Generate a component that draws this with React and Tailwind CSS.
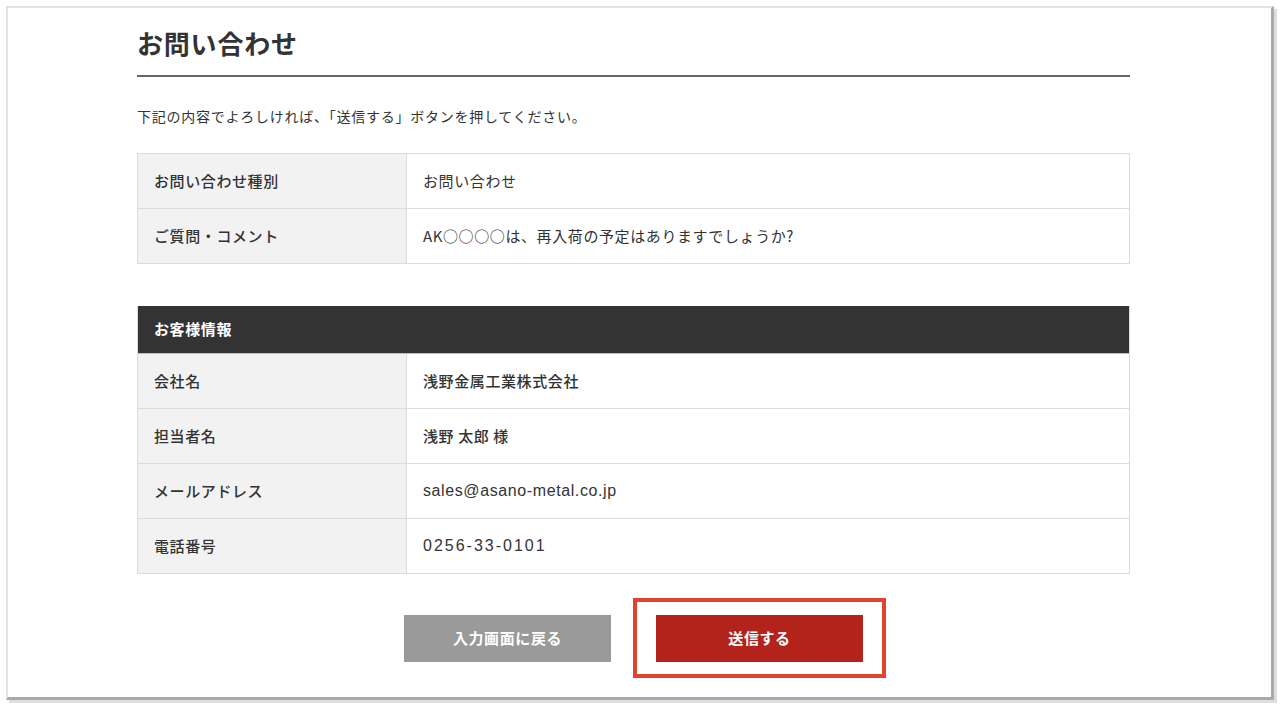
const inquiry = [
  { label: 'お問い合わせ種別', value: 'お問い合わせ' },
  { label: 'ご質問・コメント', value: 'AK○○○○は、再入荷の予定はありますでしょうか?' },
];

const customer = [
  { label: '会社名', value: '浅野金属工業株式会社', kind: 'strong' },
  { label: '担当者名', value: '浅野 太郎 様', kind: 'strong' },
  { label: 'メールアドレス', value: 'sales@asano-metal.co.jp', kind: 'mail' },
  { label: '電話番号', value: '0256-33-0101', kind: 'tel' },
];

const valueClass = {
  strong: 'font-medium',
  mail: "font-['Liberation_Sans',sans-serif] text-[16px] tracking-[0.6px]",
  tel: "font-['Liberation_Sans',sans-serif] text-[16px] tracking-[2px]",
};

const Row = ({ label, value, kind }) => (
  <div className="flex h-[55px] border-b border-[#dcdcdc]">
    <div className="w-[269px] shrink-0 bg-[#f2f2f2] border-r border-[#dcdcdc] pl-[16px] flex items-center font-medium">
      {label}
    </div>
    <div className={`flex-1 pl-[16px] flex items-center ${valueClass[kind] || ''}`}>{value}</div>
  </div>
);

export default function App() {
  return (
    <div
      className="w-[1284px] h-[710px] bg-white pt-[6px] pl-[6px] text-[#333] text-[15px] tracking-[0.6px]"
      style={{ fontFamily: '"Noto Sans CJK JP", "Noto Sans", sans-serif' }}
    >
      <div className="w-[1268px] h-[694px] bg-white border-t-2 border-l-2 border-[#e3e3e3] border-r-[3px] border-b-[3px] border-r-[#a9a9a9] border-b-[#a9a9a9] shadow-[3px_3px_0_#dedede]">
        <div className="ml-[129px] w-[993px] pt-[15px]">
          <h1 className="text-[26px] leading-[40px] font-bold pb-[12px] border-b-2 border-[#666] tracking-[0.8px]">
            お問い合わせ
          </h1>
          <p className="mt-[27px] text-[14px] leading-[24px] tracking-[0.75px]">
            下記の内容でよろしければ、「送信する」ボタンを押してください。
          </p>

          <div className="mt-[25px] border-t border-x border-[#dcdcdc]">
            {inquiry.map((r) => (
              <Row key={r.label} {...r} />
            ))}
          </div>

          <div className="mt-[42px] border-x border-[#dcdcdc]">
            <div className="h-[48px] bg-[#333] text-white font-bold pl-[16px] flex items-center border-b border-[#bdbdbd]">
              お客様情報
            </div>
            {customer.map((r) => (
              <Row key={r.label} {...r} />
            ))}
          </div>

          <div className="mt-[41px] flex justify-center gap-[45px]">
            <button className="w-[207px] h-[47px] bg-[#9a9a9a] text-white font-bold text-[15px] tracking-[0.6px]">
              入力画面に戻る
            </button>
            <div className="relative">
              <button className="w-[207px] h-[47px] bg-[#b3231b] text-white font-bold text-[15px] tracking-[0.6px]">
                送信する
              </button>
              <span className="absolute left-[-23px] top-[-17px] right-[-23px] bottom-[-16px] border-4 border-[#e2432d] pointer-events-none" />
            </div>
          </div>
        </div>
      </div>
    </div>
  );
}
